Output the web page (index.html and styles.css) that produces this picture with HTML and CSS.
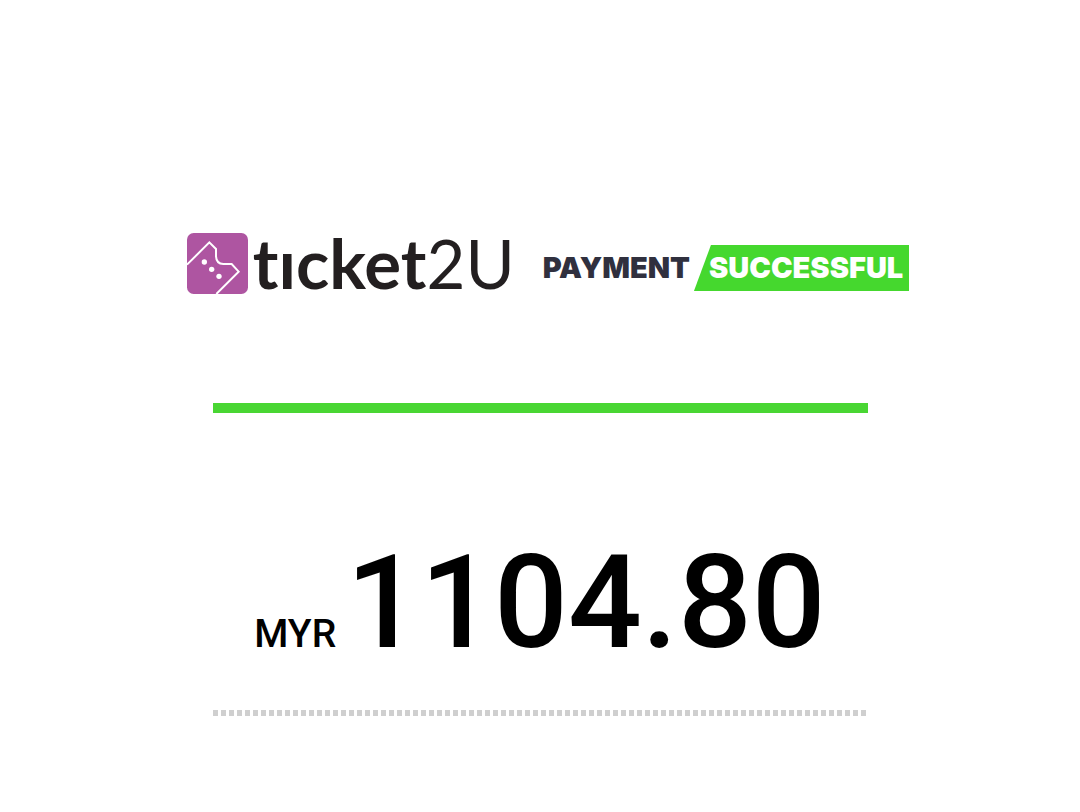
FILE: index.html
```html
<!DOCTYPE html>
<html lang="en">
<head>
  <meta charset="UTF-8">
  <meta name="viewport" content="width=device-width, initial-scale=1.0">
  <title>Payment Successful</title>
  <link rel="stylesheet" href="styles.css">
</head>
<body>
  <header class="header">
    <div class="logo">
      <svg class="logo-icon" viewBox="0 0 183 183" aria-hidden="true">
        <rect width="183" height="183" rx="20" fill="#ae55a1"/>
        <path d="M0 95 L67 28 L87 48 V70 Q88 92 109 93 H134 L155 116 L88 183" fill="none" stroke="#fff" stroke-width="6"/>
        <circle cx="52" cy="87" r="8" fill="#fff"/>
        <circle cx="74" cy="109" r="8" fill="#fff"/>
        <circle cx="96" cy="130" r="8" fill="#fff"/>
      </svg>
      <span class="logo-name">tıcket<span class="logo-suffix">2U</span></span>
    </div>
    <h1 class="status">
      <span class="status-label">PAYMENT</span>
      <span class="status-value">SUCCESSFUL</span>
    </h1>
  </header>
  <main class="receipt">
    <p class="amount">
      <span class="currency">MYR</span>
      <span class="total">1104.80</span>
    </p>
  </main>
</body>
</html>
```

FILE: styles.css
```css
body {
  margin: 0;
  padding: 231px 24px 24px;
  background-color: #fff;
  font-family: Roboto, sans-serif;
}

.header {
  display: flex;
  justify-content: center;
  align-items: center;
  gap: 28px;
  padding-left: 16px;
}

.logo {
  display: flex;
  align-items: center;
  gap: 5px;
}

.logo-icon {
  width: 61px;
  height: 61px;
}

.logo-name {
  font-family: Lato, sans-serif;
  font-size: 69px;
  font-weight: 700;
  font-variant-ligatures: none;
  line-height: 64px;
  color: #231f20;
}

.logo-suffix {
  font-size: 67px;
  font-weight: 400;
  line-height: 1px;
}

.status {
  display: flex;
  align-items: center;
  gap: 4px;
  margin: 0;
  padding-top: 10px;
  font-family: Inter, sans-serif;
  font-size: 29px;
  font-weight: 900;
  line-height: 46px;
}

.status-label {
  color: #30303e;
}

.status-value {
  padding: 0 6px 0 15px;
  background-color: #45d82e;
  color: #fff;
  clip-path: polygon(17px 0, 100% 0, 100% 100%, 0 100%);
}

/* solid line above the amount, dashed one below */
.receipt {
  max-width: 655px;
  margin: 108px auto 0;
  border-top: 10px solid #49d633;
}

.receipt::after {
  content: "";
  display: block;
  height: 6px;
  background: repeating-linear-gradient(to right, #cfcfcf 0 5px, #fff 5px 8px);
}

.amount {
  display: flex;
  justify-content: center;
  align-items: baseline;
  gap: 10px;
  margin: 0;
  padding: 116px 0 33px;
  font-weight: 500;
  color: #000;
}

.currency {
  font-size: 39px;
}

.total {
  font-size: 130px;
  line-height: 148px;
}
```
